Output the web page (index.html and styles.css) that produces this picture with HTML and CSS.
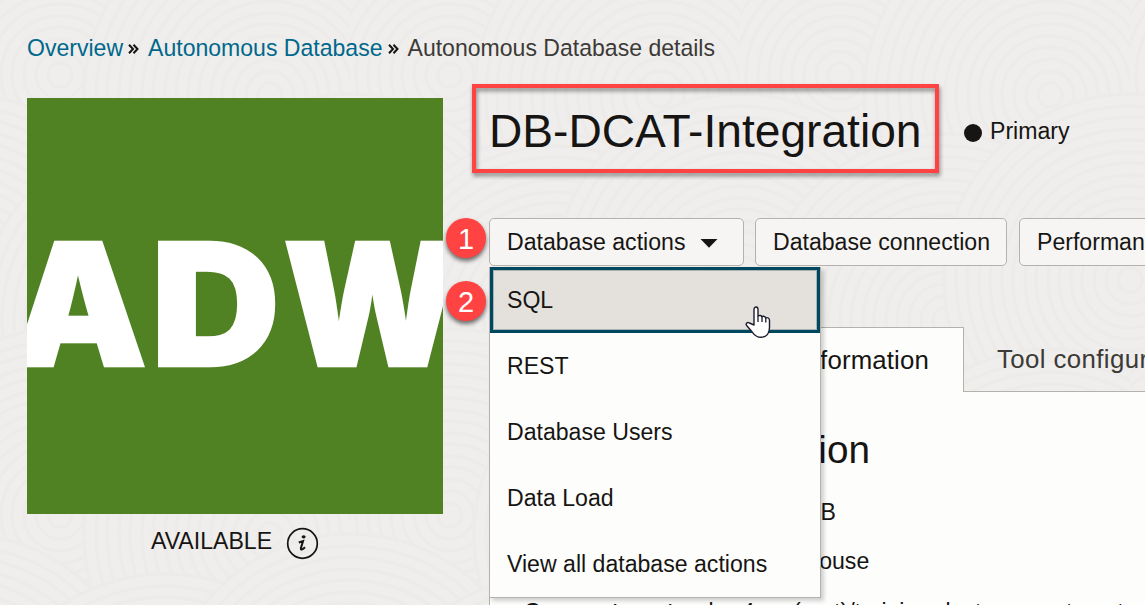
FILE: index.html
```html
<!DOCTYPE html>
<html lang="en">
<head>
<meta charset="utf-8">
<title>Autonomous Database details</title>
<link rel="stylesheet" href="styles.css">
</head>
<body>
<svg class="texture" width="1145" height="605" aria-hidden="true">
  <defs>
    <g id="rings" fill="#f0eeec" stroke="#edebe9" stroke-width="3">
      <circle r="186"/><circle r="174"/><circle r="163"/><circle r="151"/><circle r="140"/><circle r="128"/><circle r="117"/><circle r="105"/><circle r="94"/><circle r="82"/><circle r="71"/><circle r="59"/><circle r="48"/><circle r="36"/><circle r="24"/><circle r="12"/>
    </g>
    <pattern id="waves" width="390" height="440" patternUnits="userSpaceOnUse" x="-40" y="-160">
      <rect width="390" height="440" fill="#f0eeec"/>
      <use href="#rings" x="0" y="0"/><use href="#rings" x="205" y="40"/><use href="#rings" x="390" y="0"/>
      <use href="#rings" x="100" y="235"/><use href="#rings" x="310" y="255"/>
      <use href="#rings" x="0" y="440"/><use href="#rings" x="205" y="480"/><use href="#rings" x="390" y="440"/>
    </pattern>
  </defs>
  <rect width="1145" height="605" fill="url(#waves)"/>
</svg>
<div class="page">
  <nav class="breadcrumb">
    <a class="crumb">Overview</a>
    <svg class="sep" width="11" height="10" viewBox="0 0 11 10"><path d="M1 .8 5 5 1 9.2M5.5 .8 9.5 5 5.5 9.2"/></svg>
    <a class="crumb">Autonomous Database</a>
    <svg class="sep" width="11" height="10" viewBox="0 0 11 10"><path d="M1 .8 5 5 1 9.2M5.5 .8 9.5 5 5.5 9.2"/></svg>
    <span class="current">Autonomous Database details</span>
  </nav>
  <div class="columns">
    <aside class="side">
      <svg class="tile" width="416" height="416" viewBox="27 98 416 416">
        <rect x="27" y="98" width="416" height="416" fill="#508223"/>
        <text x="11" y="365.500" textLength="136" lengthAdjust="spacingAndGlyphs">A</text>
        <text x="151" y="365.500" textLength="129" lengthAdjust="spacingAndGlyphs">D</text>
        <text x="283" y="365.500" textLength="179" lengthAdjust="spacingAndGlyphs">W</text>
      </svg>
      <div class="status">
        <span>AVAILABLE</span>
        <svg width="33" height="33" viewBox="0 0 33 33"><circle cx="16.500" cy="16.500" r="14.800" fill="none" stroke="#161513" stroke-width="1.700"/><ellipse cx="17.600" cy="9.800" rx="2" ry="1.600" fill="#161513"/><path d="M12.800 15.600 17 14.200 15 20.800C14.500 23.400 16.300 23 19 20.300" fill="none" stroke="#161513" stroke-width="2.100"/></svg>
      </div>
    </aside>
    <main class="main">
      <header class="heading">
        <h1>DB-DCAT-Integration</h1>
        <span class="dot"></span><span class="role">Primary</span>
        <div class="highlight"></div>
      </header>
      <div class="actions">
        <div class="button b1">Database actions<svg width="18" height="9" viewBox="0 0 18 9"><path d="M.5 0h17L9 8.800z" fill="#161513"/></svg></div>
        <div class="button b2">Database connection</div>
        <div class="button b3">Performance hub</div>
        <span class="step one">1</span>
        <span class="step two">2</span>
        <ul class="menu">
          <li class="active">SQL</li><li>REST</li><li>Database Users</li><li>Data Load</li><li>View all database actions</li>
        </ul>
        <svg class="cursor" width="26" height="33" viewBox="0 0 26 33"><path d="M9 19V3.500C9 .2 13 .2 13 3.500V10c1.300-1 3.500-.5 3.900.7 1.400-.8 3.500-.2 3.800 1.100 1.900-.6 3.800.3 3.800 2.500v7c0 6-3 10-8.500 10-4.500 0-6.700-2.300-9-5.500L1.600 19.500c-1.200-2 .8-3.700 2.800-2.500Z" fill="#fff" stroke="#1c1c2b" stroke-width="1.400" stroke-linejoin="round"/><path d="M13 10v6M17 10.800V16M20.800 12v4.500" fill="none" stroke="#1c1c2b" stroke-width="1.300"/></svg>
      </div>
      <div class="tabs">
        <div class="tab selected">information</div>
        <div class="tab">Tool configuration</div>
      </div>
      <section class="panel">
        <h2>General information</h2>
        <p class="dbname"><b>Database name:</b> DCATDB</p>
        <p class="workload"><b>Workload type:</b> Data Warehouse</p>
        <p class="compartment"><b>Compartment:</b> <span>adwc4pm (root)/training-dcat-compartment</span></p>
      </section>
    </main>
  </div>
</div>
</body>
</html>
```

FILE: styles.css
```css
* { box-sizing: border-box; }
body {
  margin: 0;
  width: 1145px;
  height: 605px;
  overflow: hidden;
  background: #f0eeec;
  color: #161513;
  font: 23.1px/28px "Liberation Sans", Arial, sans-serif;
}
.texture { position: absolute; inset: 0; }
.page { position: relative; height: 605px; overflow: hidden; padding: 34px 0 0 27px; }
.breadcrumb { display: flex; height: 28px; align-items: center; white-space: nowrap; font-size: 23.05px; }
.crumb { color: #00688c; }
.current { color: #3c3a37; }
.sep { margin: 2px 9px 0 5px; flex: none; }
.sep path { fill: none; stroke: #161513; stroke-width: 2; }
.columns { display: flex; gap: 46px; margin-top: 36px; }
.side { width: 416px; flex: none; }
.tile { display: block; }
.tile text { font: 900 170px Inter, "Open Sans", sans-serif; fill: #fff; stroke: #fff; stroke-width: 2.5px; }
.status { display: flex; align-items: center; justify-content: center; gap: 14px; margin-top: 13px; }
.status span { margin-top: -6px; }
.main { flex: none; width: 720px; }
.heading { position: relative; display: flex; align-items: center; height: 68px; }
h1 { margin: -2px 0 0; font-weight: 400; font-size: 46.15px; line-height: 52px; white-space: nowrap; width: 475px; }
.dot { width: 18px; height: 18px; border-radius: 50%; background: #161513; margin-top: 2px; }
.role { margin-left: 8px; margin-top: -3px; }
.highlight { position: absolute; left: -17px; top: -14px; width: 467px; height: 89px; border: 4px solid #ff4242; filter: drop-shadow(1px 3px 2px rgba(0, 0, 0, .45)); }
.actions { position: relative; display: flex; margin-top: 52px; height: 48px; z-index: 2; }
.button { height: 48px; border: 1px solid #b5b1ac; border-radius: 5px; background: #f7f5f3; padding: 9px 17px; white-space: nowrap; flex: none; }
.b1 { width: 255px; display: flex; align-items: center; justify-content: space-between; padding-right: 25px; }
.b1 svg { margin-top: 3px; }
.b2 { width: 252px; margin-left: 11px; }
.b3 { width: 208px; margin-left: 12px; }
.step { position: absolute; left: -43px; width: 40px; height: 40px; border-radius: 50%; background: #ff4242; color: #fff; font-size: 29px; line-height: 42px; text-align: center; box-shadow: 0 3px 4px rgba(0, 0, 0, .55); }
.one { top: 0; }
.two { top: 63px; }
.menu { position: absolute; left: 0; top: 49px; width: 332px; height: 331px; margin: 0; padding: 0; list-style: none; background: #fdfdfb; border: 1px solid #b5b1ac; border-top: 0; box-shadow: 3px 3px 4px rgba(0, 0, 0, .18); }
.menu li { height: 66px; padding: 19px 17px; line-height: 28px; }
.menu .active { width: 330px; background: #e4e1dd; border: 3px solid #00485f; padding: 16px 14px; box-shadow: inset 0 0 0 1px #a9b3b4; }
.cursor { position: absolute; left: 256px; top: 88px; }
.tabs { display: flex; margin-top: 61px; height: 64px; }
.tab { flex: none; width: 246px; padding: 18px 33px; font-size: 25.8px; letter-spacing: .4px; color: #3c3a37; white-space: nowrap; border-bottom: 1px solid #b5b1ac; height: 65px; }
.selected { width: 475px; text-align: right; padding-right: 34px; letter-spacing: .15px; border: 1px solid #b5b1ac; border-bottom: 0; background: #fdfdfb; color: #161513; }
.panel { height: 240px; padding: 1px 0 0 34px; background: #fdfdfb; border-left: 1px solid #b5b1ac; white-space: nowrap; }
h2 { width: 346px; margin: 35px 0 0; text-align: right; font-weight: 400; font-size: 38.7px; line-height: 46px; }
.panel p { margin: 0; }
.dbname { width: 312px; text-align: right; padding-top: 25px; }
.workload { width: 343px; text-align: right; padding-top: 21px; }
.compartment { padding-top: 23px; letter-spacing: -.02px; }
```
